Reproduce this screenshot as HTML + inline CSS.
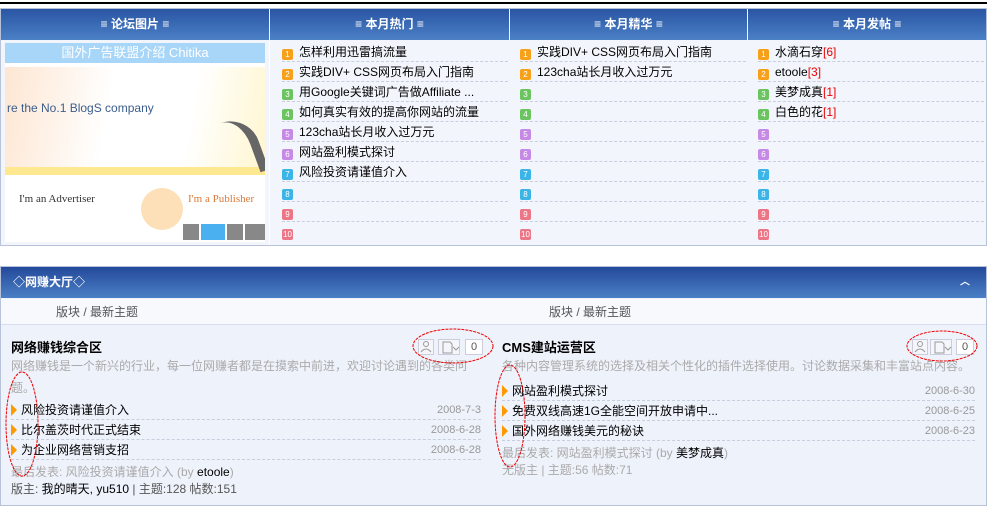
<!DOCTYPE html>
<html><head><meta charset="utf-8"><style>
*{margin:0;padding:0;box-sizing:border-box}
body{width:987px;height:498px;overflow:hidden;background:#fff;font-family:"Liberation Sans","Noto Sans CJK SC",sans-serif;font-size:12px;color:#000;position:relative}
.a{position:absolute}
.hdr{background:linear-gradient(#2a55a3,#4b80c6);color:#fff;font-weight:bold;text-align:center;line-height:31px;font-size:12px}
.bg{background:#f2f5fb}
.row{position:absolute;height:20px;line-height:20px;border-bottom:1px dashed #c8cede;white-space:nowrap}
.n{display:inline-block;width:11px;height:11px;border-radius:2px;color:#fff;font-size:8px;line-height:11px;text-align:center;vertical-align:-1px;margin-right:6px}
.o{background:#f7a11a}.g{background:#6cc461}.p{background:#c68ae6}.b{background:#3bb4e8}.r{background:#ec7586}
.red{color:#e00}
.tri{display:inline-block;width:0;height:0;border-left:6px solid #f90;border-top:6px solid transparent;border-bottom:6px solid transparent;vertical-align:-2px;margin-right:4px}
.date{position:absolute;right:0;color:#999;font-size:11px}
.ib{position:absolute;top:339px;height:16px;border:1px solid #ccd;background:#f4f6fb}
</style></head><body>
<div class="a" style="left:0;top:2px;width:987px;height:2px;background:#000"></div>
<div class="a bg" style="left:0;top:8px;width:987px;height:238px;border:1px solid #b8c2d8"></div>
<div class="a hdr" style="left:1px;top:9px;width:268px">≡ 论坛图片 ≡</div>
<div class="a hdr" style="left:270px;top:9px;width:239px">≡ 本月热门 ≡</div>
<div class="a hdr" style="left:510px;top:9px;width:237px">≡ 本月精华 ≡</div>
<div class="a hdr" style="left:748px;top:9px;width:238px">≡ 本月发帖 ≡</div>
<div class="a" style="left:5px;top:43px;width:260px;height:199px;background:#fff;overflow:hidden">
<div class="a" style="left:0;top:0;width:260px;height:20px;background:#a8d6f8;color:#fff;font-size:13px;text-align:center;line-height:20px">国外广告联盟介绍 Chitika</div>
<div class="a" style="left:0;top:24px;width:260px;height:100px;background:linear-gradient(100deg,#fde6d2,#fff 40%,#fff 70%,#fff6d0);"></div>
<div class="a" style="left:0;top:124px;width:260px;height:8px;background:#ffe890"></div>
<div class="a" style="left:2px;top:58px;color:#3b5e8c;font-size:12px">re the No.1 BlogS company</div>
<div class="a" style="left:215px;top:75px;width:40px;height:60px;border-right:9px solid #666;border-radius:0 30px 0 0;transform:rotate(-20deg)"></div>
<div class="a" style="left:14px;top:150px;color:#333;font-size:11px;font-family:'Liberation Serif',serif">I'm an Advertiser</div>
<div class="a" style="left:136px;top:145px;width:42px;height:42px;border-radius:50%;background:#fde0b8"></div>
<div class="a" style="left:183px;top:150px;color:#d87a3a;font-size:11px;font-family:'Liberation Serif',serif">I'm a Publisher</div>
<div class="a" style="left:178px;top:181px;width:16px;height:16px;background:#888"></div>
<div class="a" style="left:196px;top:181px;width:24px;height:16px;background:#4ab0f0"></div>
<div class="a" style="left:222px;top:181px;width:16px;height:16px;background:#888"></div>
<div class="a" style="left:240px;top:181px;width:20px;height:16px;background:#888"></div>
</div>
<div class="a" style="left:269px;top:41px;width:1px;height:204px;background:#fff"></div>

<div class="row" style="left:282px;top:42px;width:226px"><span class="n o">1</span>怎样利用迅雷搞流量</div>
<div class="row" style="left:282px;top:62px;width:226px"><span class="n o">2</span>实践DIV+ CSS网页布局入门指南</div>
<div class="row" style="left:282px;top:82px;width:226px"><span class="n g">3</span>用Google关键词广告做Affiliate ...</div>
<div class="row" style="left:282px;top:102px;width:226px"><span class="n g">4</span>如何真实有效的提高你网站的流量</div>
<div class="row" style="left:282px;top:122px;width:226px"><span class="n p">5</span>123cha站长月收入过万元</div>
<div class="row" style="left:282px;top:142px;width:226px"><span class="n p">6</span>网站盈利模式探讨</div>
<div class="row" style="left:282px;top:162px;width:226px"><span class="n b">7</span>风险投资请谨值介入</div>
<div class="row" style="left:282px;top:182px;width:226px"><span class="n b">8</span></div>
<div class="row" style="left:282px;top:202px;width:226px"><span class="n r">9</span></div>
<div class="row" style="left:282px;top:222px;width:226px;border:0"><span class="n r">10</span></div>

<div class="row" style="left:520px;top:42px;width:226px"><span class="n o">1</span>实践DIV+ CSS网页布局入门指南</div>
<div class="row" style="left:520px;top:62px;width:226px"><span class="n o">2</span>123cha站长月收入过万元</div>
<div class="row" style="left:520px;top:82px;width:226px"><span class="n g">3</span></div>
<div class="row" style="left:520px;top:102px;width:226px"><span class="n g">4</span></div>
<div class="row" style="left:520px;top:122px;width:226px"><span class="n p">5</span></div>
<div class="row" style="left:520px;top:142px;width:226px"><span class="n p">6</span></div>
<div class="row" style="left:520px;top:162px;width:226px"><span class="n b">7</span></div>
<div class="row" style="left:520px;top:182px;width:226px"><span class="n b">8</span></div>
<div class="row" style="left:520px;top:202px;width:226px"><span class="n r">9</span></div>
<div class="row" style="left:520px;top:222px;width:226px;border:0"><span class="n r">10</span></div>

<div class="row" style="left:758px;top:42px;width:226px"><span class="n o">1</span>水滴石穿<span class="red">[6]</span></div>
<div class="row" style="left:758px;top:62px;width:226px"><span class="n o">2</span>etoole<span class="red">[3]</span></div>
<div class="row" style="left:758px;top:82px;width:226px"><span class="n g">3</span>美梦成真<span class="red">[1]</span></div>
<div class="row" style="left:758px;top:102px;width:226px"><span class="n g">4</span>白色的花<span class="red">[1]</span></div>
<div class="row" style="left:758px;top:122px;width:226px"><span class="n p">5</span></div>
<div class="row" style="left:758px;top:142px;width:226px"><span class="n p">6</span></div>
<div class="row" style="left:758px;top:162px;width:226px"><span class="n b">7</span></div>
<div class="row" style="left:758px;top:182px;width:226px"><span class="n b">8</span></div>
<div class="row" style="left:758px;top:202px;width:226px"><span class="n r">9</span></div>
<div class="row" style="left:758px;top:222px;width:226px;border:0"><span class="n r">10</span></div>

<div class="a" style="left:0;top:266px;width:987px;height:240px;border:1px solid #b8c2d8;background:#eef2fb"></div>
<div class="a" style="left:1px;top:267px;width:985px;height:31px;background:linear-gradient(#24499a,#4b80c6);color:#fff;font-weight:bold;line-height:31px;padding-left:12px">◇网赚大厅◇<span style="position:absolute;right:16px;font-size:10px">︿</span></div>
<div class="a" style="left:1px;top:299px;width:985px;height:26px;background:#f7f9fd;border-bottom:1px solid #d8def0;color:#555;line-height:26px"><span style="position:absolute;left:55px">版块 / 最新主题</span><span style="position:absolute;left:548px">版块 / 最新主题</span></div>

<div class="a" style="left:11px;top:337px;font-weight:bold;font-size:13px">网络赚钱综合区</div>
<div class="a" style="left:11px;top:355px;width:465px;color:#aaa;line-height:22px">网络赚钱是一个新兴的行业，每一位网赚者都是在摸索中前进，欢迎讨论遇到的各类问题。</div>
<div class="a" style="left:11px;top:400px;width:470px">
<div class="row" style="left:0;top:0;width:470px"><span class="tri"></span>风险投资请谨值介入<span class="date">2008-7-3</span></div>
<div class="row" style="left:0;top:20px;width:470px"><span class="tri"></span>比尔盖茨时代正式结束<span class="date">2008-6-28</span></div>
<div class="row" style="left:0;top:40px;width:470px"><span class="tri"></span>为企业网络营销支招<span class="date">2008-6-28</span></div>
</div>
<div class="a" style="left:11px;top:464px;color:#aaa;line-height:17px">最后发表: 风险投资请谨值介入 (by <span style="color:#000">etoole</span>)<br><span style="color:#555">版主: <span style="color:#000">我的晴天, yu510</span> | 主题:128 帖数:151</span></div>

<div class="a" style="left:502px;top:337px;font-weight:bold;font-size:13px">CMS建站运营区</div>
<div class="a" style="left:502px;top:355px;width:480px;color:#aaa;line-height:22px;white-space:nowrap">各种内容管理系统的选择及相关个性化的插件选择使用。讨论数据采集和丰富站点内容。</div>
<div class="a" style="left:502px;top:381px;width:473px">
<div class="row" style="left:0;top:0;width:473px"><span class="tri"></span>网站盈利模式探讨<span class="date">2008-6-30</span></div>
<div class="row" style="left:0;top:20px;width:473px"><span class="tri"></span>免费双线高速1G全能空间开放申请中...<span class="date">2008-6-25</span></div>
<div class="row" style="left:0;top:40px;width:473px"><span class="tri"></span>国外网络赚钱美元的秘诀<span class="date">2008-6-23</span></div>
</div>
<div class="a" style="left:502px;top:445px;color:#aaa;line-height:17px">最后发表: 网站盈利模式探讨 (by <span style="color:#000">美梦成真</span>)<br>无版主 | 主题:56 帖数:71</div>

<div class="ib" style="left:418px;width:16px"></div>
<div class="ib" style="left:438px;width:22px"></div>
<div class="ib" style="left:465px;width:18px;background:#fff;font-size:11px;text-align:center;line-height:14px;color:#555">0</div>
<div class="ib" style="left:912px;width:16px"></div>
<div class="ib" style="left:930px;width:22px"></div>
<div class="ib" style="left:956px;width:18px;background:#fff;font-size:11px;text-align:center;line-height:14px;color:#555">0</div>

<svg class="a" style="left:0;top:0" width="987" height="498">
<g fill="none" stroke="#999" stroke-width="1">
<circle cx="426" cy="344" r="2.5"/><path d="M421 352q5-6 10 0"/>
<path d="M443 342h7l2 2v9h-9z"/><path d="M453 347l3 3 3-3"/>
<circle cx="920" cy="344" r="2.5"/><path d="M915 352q5-6 10 0"/>
<path d="M935 342h7l2 2v9h-9z"/><path d="M945 347l3 3 3-3"/>
</g>
<g fill="none" stroke="#e00" stroke-width="1" stroke-dasharray="3,1">
<ellipse cx="453" cy="346" rx="40" ry="17"/>
<ellipse cx="942" cy="346" rx="35" ry="15"/>
<ellipse cx="22" cy="424" rx="16" ry="52"/>
<ellipse cx="510" cy="416" rx="15" ry="51"/>
</g></svg>
</body></html>
